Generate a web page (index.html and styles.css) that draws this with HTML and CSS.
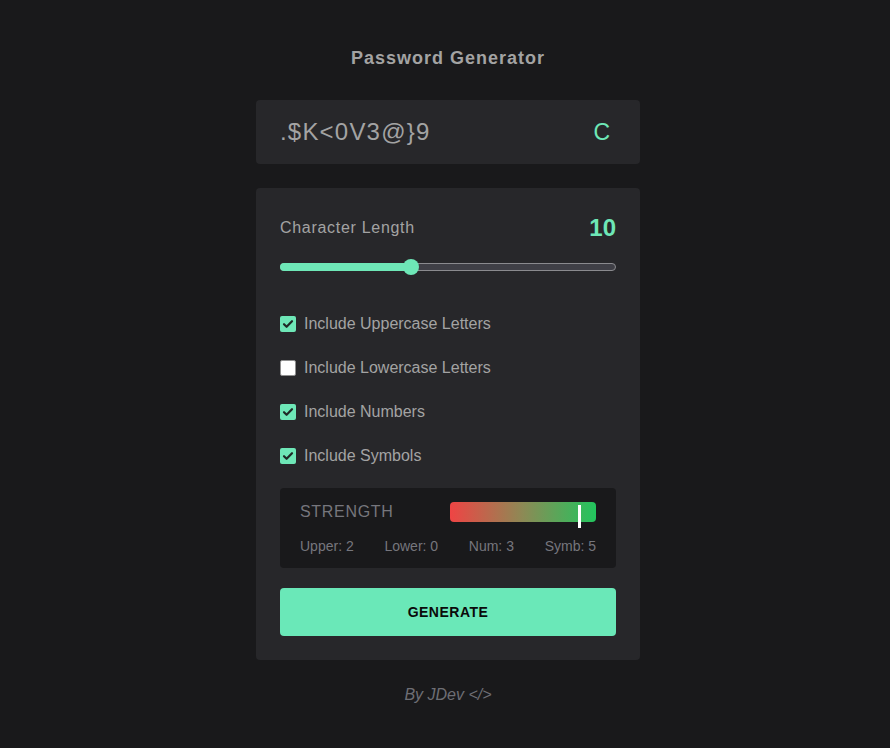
FILE: index.html
```html
<!DOCTYPE html>
<html lang="en">
<head>
<meta charset="utf-8">
<title>Password Generator</title>
<link rel="stylesheet" href="styles.css">
</head>
<body>
<main class="app">
  <h1 class="title">Password Generator</h1>
  <div class="output">
    <span class="password">.$K&lt;0V3@}9</span>
    <button class="copy" type="button">C</button>
  </div>
  <section class="panel">
    <div class="length-row">
      <span class="label">Character Length</span>
      <span class="length-value">10</span>
    </div>
    <div class="slider">
      <div class="slider-track"></div>
      <div class="slider-fill" style="width: 39%"></div>
      <div class="slider-thumb" style="left: 39%"></div>
    </div>
    <div class="options">
      <label class="option"><span class="box checked"><svg viewBox="0 0 16 16" width="16" height="16"><path d="M4 8.2l2.6 2.6L12 5.2" fill="none" stroke="#1f2a26" stroke-width="2.2" stroke-linecap="round" stroke-linejoin="round"/></svg></span>Include Uppercase Letters</label>
      <label class="option"><span class="box"></span>Include Lowercase Letters</label>
      <label class="option"><span class="box checked"><svg viewBox="0 0 16 16" width="16" height="16"><path d="M4 8.2l2.6 2.6L12 5.2" fill="none" stroke="#1f2a26" stroke-width="2.2" stroke-linecap="round" stroke-linejoin="round"/></svg></span>Include Numbers</label>
      <label class="option"><span class="box checked"><svg viewBox="0 0 16 16" width="16" height="16"><path d="M4 8.2l2.6 2.6L12 5.2" fill="none" stroke="#1f2a26" stroke-width="2.2" stroke-linecap="round" stroke-linejoin="round"/></svg></span>Include Symbols</label>
    </div>
    <div class="strength">
      <div class="strength-top">
        <span class="strength-label">Strength</span>
        <div class="meter">
          <span class="marker" style="left: 88%"></span>
        </div>
      </div>
      <div class="stats">
        <span>Upper: 2</span>
        <span>Lower: 0</span>
        <span>Num: 3</span>
        <span>Symb: 5</span>
      </div>
    </div>
    <button class="generate" type="button">GENERATE</button>
  </section>
  <footer class="credit">By JDev &lt;/&gt;</footer>
</main>
</body>
</html>
```

FILE: styles.css
```css
* { box-sizing: border-box; }

body {
  margin: 0;
  padding-left: 6px;
  background: #19191b;
  font-family: "Liberation Sans", Arial, sans-serif;
  color: #a1a1aa;
}

.app {
  width: 384px;
  margin: 0 auto;
  padding-top: 47px;
  display: flex;
  flex-direction: column;
}

.title {
  margin: 0 0 31px;
  font-size: 18px;
  line-height: 22px;
  font-weight: 700;
  letter-spacing: 1px;
  text-align: center;
  color: #a3a3a3;
}

.output {
  height: 64px;
  background: #27272a;
  border-radius: 4px;
  display: flex;
  align-items: center;
  justify-content: space-between;
  padding: 0 30px 0 24px;
}

.password {
  font-size: 24px;
  letter-spacing: 1.2px;
  color: #a3a3a3;
}

.copy {
  background: none;
  border: 0;
  padding: 0;
  font-family: inherit;
  font-size: 23px;
  color: #6ee7b7;
  cursor: pointer;
}

.panel {
  margin-top: 24px;
  background: #27272a;
  border-radius: 4px;
  padding: 25px 24px 24px;
  display: flex;
  flex-direction: column;
}

.length-row {
  height: 30px;
  display: flex;
  align-items: center;
  justify-content: space-between;
}

.label {
  font-size: 16px;
  letter-spacing: 0.7px;
  color: #a3a3a3;
}

.length-value {
  font-size: 24px;
  font-weight: 700;
  color: #6ee7b7;
}

.slider {
  position: relative;
  height: 16px;
  margin-top: 16px;
}

.slider-track {
  position: absolute;
  left: 0;
  right: 0;
  top: 4px;
  height: 8px;
  border-radius: 4px;
  background: #3f3f46;
  border: 1px solid #8a8a8e;
}

.slider-fill {
  position: absolute;
  left: 0;
  top: 4px;
  height: 8px;
  border-radius: 4px;
  background: #6ee7b7;
}

.slider-thumb {
  position: absolute;
  top: 0;
  width: 16px;
  height: 16px;
  margin-left: -8px;
  border-radius: 50%;
  background: #6ee7b7;
}

.options {
  margin-top: 39px;
  display: flex;
  flex-direction: column;
  gap: 24px;
}

.option {
  height: 20px;
  display: flex;
  align-items: center;
  gap: 8px;
  font-size: 16px;
  color: #a3a3a3;
}

.box {
  width: 16px;
  height: 16px;
  border-radius: 2px;
  background: #ffffff;
  border: 1px solid #8f8f8f;
  display: flex;
  align-items: center;
  justify-content: center;
  overflow: hidden;
}

.box.checked {
  background: #6ee7b7;
  border: 0;
}

.strength {
  margin-top: 22px;
  background: #19191b;
  border-radius: 4px;
  padding: 14px 20px;
  display: flex;
  flex-direction: column;
  gap: 16px;
}

.strength-top {
  height: 20px;
  display: flex;
  align-items: center;
  justify-content: space-between;
}

.strength-label {
  font-size: 16px;
  letter-spacing: 0.7px;
  text-transform: uppercase;
  color: #76767d;
}

.meter {
  position: relative;
  width: 146px;
  height: 20px;
  border-radius: 4px;
  background: linear-gradient(to right, #ef4444, #8c8a55 50%, #22c55e);
}

.marker {
  position: absolute;
  top: 3px;
  width: 3px;
  height: 23px;
  background: #ffffff;
}

.stats {
  display: flex;
  justify-content: space-between;
  font-size: 14px;
  line-height: 16px;
  color: #76767d;
}

.generate {
  margin-top: 20px;
  height: 48px;
  border: 0;
  border-radius: 4px;
  background: #6ae8b8;
  font-family: inherit;
  font-size: 14px;
  font-weight: 700;
  letter-spacing: 0.5px;
  color: #0a0a0a;
  cursor: pointer;
}

.credit {
  margin-top: 24px;
  text-align: center;
  font-size: 16px;
  line-height: 22px;
  font-style: italic;
  color: #6e6e74;
}
```
